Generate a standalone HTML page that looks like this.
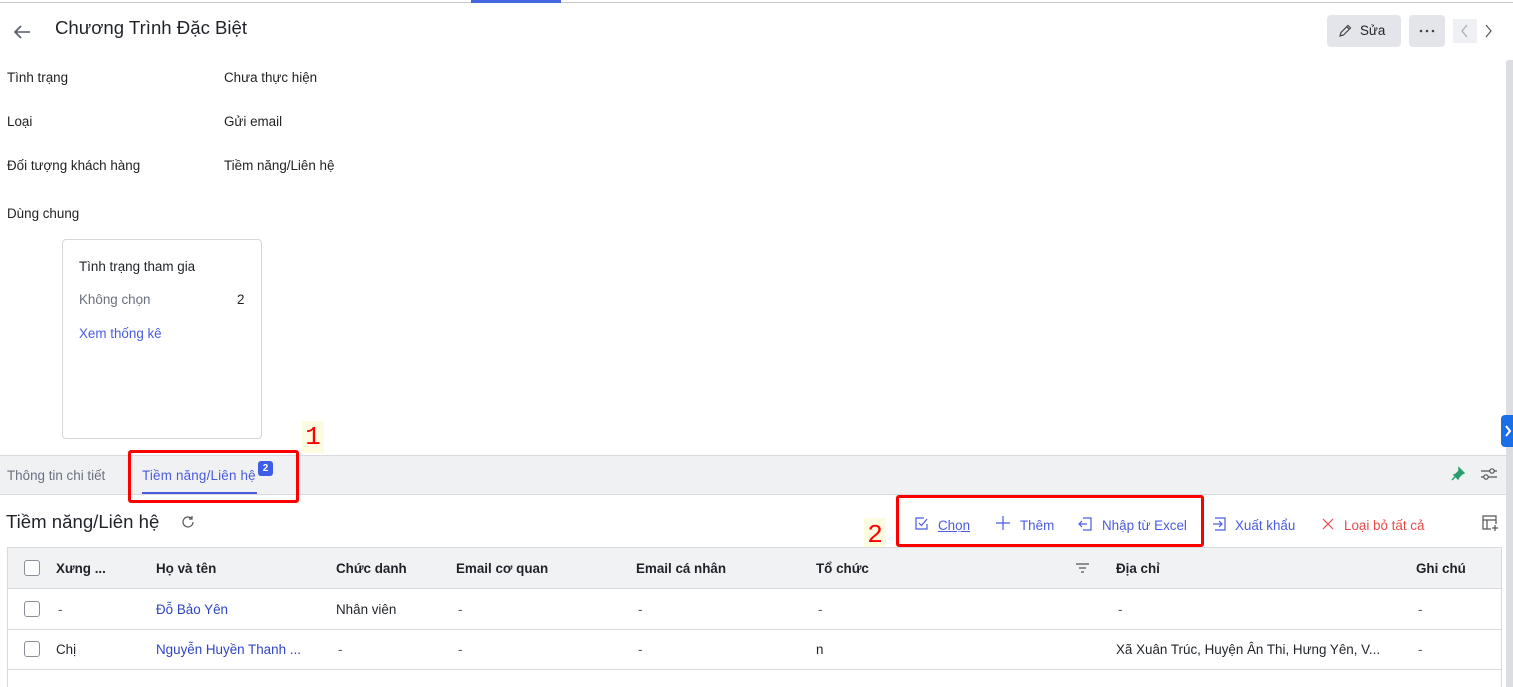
<!DOCTYPE html>
<html><head><meta charset="utf-8">
<style>
*{box-sizing:border-box;margin:0;padding:0}
body{width:1513px;height:687px;overflow:hidden;background:#fff;font-family:"Liberation Sans",sans-serif;font-size:13.4px;color:#1f2329;position:relative}
.a{position:absolute;white-space:nowrap}
.lbl{color:#222}
.th{font-weight:bold;font-size:13.4px;color:#1f2329}
.cb{position:absolute;width:16px;height:16px;border:1.5px solid #8a8f99;border-radius:3px;background:#fff}
.blue{color:#4a5be0}
.link{color:#2f44c4}
svg{position:absolute}
</style></head><body>
<div class="a" style="left:0;top:2px;width:1513px;height:1px;background:#c8c9d0"></div>
<div class="a" style="left:471px;top:0;width:90px;height:3px;background:#4466e0"></div>

<svg style="left:12px;top:23px" width="20" height="18" viewBox="0 0 20 18"><path d="M18 9H3M9 3L3 9l6 6" stroke="#555b66" stroke-width="1.6" fill="none"/></svg>
<div class="a" style="left:55px;top:17px;font-size:18.6px;color:#1f2329">Chương Trình Đặc Biệt</div>

<div class="a" style="left:1327px;top:15px;width:74px;height:32px;background:#e4e5ea;border-radius:4px"></div>
<svg style="left:1337px;top:23px" width="16" height="16" viewBox="0 0 16 16"><path d="M3 13l1-3.5 7-7 2.5 2.5-7 7z M10 4l2.5 2.5" stroke="#444" stroke-width="1.2" fill="none"/></svg>
<div class="a" style="left:1360px;top:23px;font-size:13.4px">Sửa</div>
<div class="a" style="left:1409px;top:15px;width:36px;height:32px;background:#e4e5ea;border-radius:4px"></div>
<svg style="left:1419px;top:29px" width="16" height="4"><circle cx="2" cy="2" r="1.3" fill="#444"/><circle cx="8" cy="2" r="1.3" fill="#444"/><circle cx="14" cy="2" r="1.3" fill="#444"/></svg>
<div class="a" style="left:1453px;top:19px;width:24px;height:24px;background:#eef0f3"></div>
<svg style="left:1459px;top:24px" width="12" height="14"><path d="M8 1L3 7l5 6" stroke="#aaa" stroke-width="1.2" fill="none"/></svg>
<svg style="left:1483px;top:24px" width="12" height="14"><path d="M3 1l5 6-5 6" stroke="#555" stroke-width="1.2" fill="none"/></svg>

<div class="a" style="left:1506px;top:60px;width:7px;height:627px;background:#dcdde2;border-radius:3px 0 0 0"></div>
<div class="a" style="left:1501px;top:415px;width:12px;height:32px;background:#1a6fe8;border-radius:4px 0 0 4px"></div>
<svg style="left:1503px;top:424px" width="10" height="14"><path d="M3 2l4 5-4 5" stroke="#fff" stroke-width="2" fill="none"/></svg>

<div class="a lbl" style="left:7px;top:70px">Tình trạng</div>
<div class="a lbl" style="left:224px;top:70px">Chưa thực hiện</div>
<div class="a lbl" style="left:7px;top:114px">Loại</div>
<div class="a lbl" style="left:224px;top:114px">Gửi email</div>
<div class="a lbl" style="left:7px;top:158px">Đối tượng khách hàng</div>
<div class="a lbl" style="left:224px;top:158px">Tiềm năng/Liên hệ</div>
<div class="a lbl" style="left:7px;top:206px">Dùng chung</div>

<div class="a" style="left:62px;top:239px;width:200px;height:200px;border:1px solid #d5d7dc;border-radius:4px"></div>
<div class="a" style="left:79px;top:259px">Tình trạng tham gia</div>
<div class="a" style="left:79px;top:292px;color:#6b7080">Không chọn</div>
<div class="a" style="left:237px;top:292px">2</div>
<div class="a" style="left:79px;top:326px;color:#4a5be0">Xem thống kê</div>

<div class="a" style="left:302px;top:421px;width:22px;height:32px;background:#fdfbe0;color:#f00;font-size:26px;line-height:32px;text-align:center;font-family:'Liberation Mono',monospace">1</div>

<div class="a" style="left:0;top:455px;width:1506px;height:40px;background:#f0f1f3;border-top:1px solid #d8dadf;border-bottom:1px solid #d8dadf"></div>
<div class="a" style="left:7px;top:468px;color:#6b7080">Thông tin chi tiết</div>
<div class="a" style="left:142px;top:468px;color:#4a5be0;letter-spacing:0.2px">Tiềm năng/Liên hệ</div>
<div class="a" style="left:258px;top:461px;width:15px;height:15px;background:#3d5ce8;color:#fff;border-radius:3px;font-size:10px;font-weight:bold;text-align:center;line-height:15px">2</div>
<div class="a" style="left:142px;top:492px;width:115px;height:2px;background:#4a5be0"></div>
<div class="a" style="left:128px;top:450px;width:171px;height:53px;border:3px solid #f00;border-radius:3px"></div>
<svg style="left:1450px;top:466px" width="16" height="16" viewBox="0 0 16 16"><path d="M9 2l5 5-2 1-3 3-1 2-4-4 2-1 3-3z M5 11l-3 3" stroke="#2a9d6e" fill="#2a9d6e" stroke-width="1.4"/></svg>
<svg style="left:1480px;top:466px" width="18" height="16" viewBox="0 0 18 16"><path d="M1 5h16M1 11h16" stroke="#555" stroke-width="1.2"/><circle cx="12" cy="5" r="2.2" fill="#f0f1f3" stroke="#555" stroke-width="1.2"/><circle cx="6" cy="11" r="2.2" fill="#f0f1f3" stroke="#555" stroke-width="1.2"/></svg>

<div class="a" style="left:6px;top:511px;font-size:18.6px">Tiềm năng/Liên hệ</div>
<svg style="left:180px;top:514px" width="16" height="16" viewBox="0 0 16 16"><path d="M13 8a5 5 0 1 1-1.5-3.6M12 2v3h-3" stroke="#555" stroke-width="1.2" fill="none"/></svg>

<div class="a" style="left:864px;top:518px;width:22px;height:34px;background:#fdfbe0;color:#f00;font-size:26px;line-height:34px;text-align:center;font-family:'Liberation Mono',monospace">2</div>
<div class="a" style="left:896px;top:495px;width:308px;height:52px;border:3px solid #f00;border-radius:3px"></div>

<svg style="left:914px;top:516px" width="16" height="16" viewBox="0 0 16 16"><path d="M13 8v5H2V2h8" stroke="#4a5be0" fill="none" stroke-width="1.2"/><path d="M5 7l2.5 2.5L13 3" stroke="#4a5be0" fill="none" stroke-width="1.2"/></svg>
<div class="a blue" style="left:938px;top:518px;text-decoration:underline">Chọn</div>
<svg style="left:996px;top:516px" width="14" height="14"><path d="M7 0v14M0 7h14" stroke="#4a5be0" stroke-width="1.2"/></svg>
<div class="a blue" style="left:1020px;top:518px">Thêm</div>
<svg style="left:1077px;top:516px" width="16" height="16" viewBox="0 0 16 16"><path d="M6 2h8v12H6M2 8h8M5 5L2 8l3 3" stroke="#4a5be0" fill="none" stroke-width="1.2"/></svg>
<div class="a blue" style="left:1102px;top:518px">Nhập từ Excel</div>
<svg style="left:1211px;top:516px" width="16" height="16" viewBox="0 0 16 16"><path d="M2 2h10v12H2M0 8h9M6 5l3 3-3 3" stroke="#4a5be0" fill="none" stroke-width="1.2" transform="translate(2,0)"/></svg>
<div class="a blue" style="left:1235px;top:518px">Xuất khẩu</div>
<svg style="left:1322px;top:518px" width="12" height="12"><path d="M1 1l10 10M11 1L1 11" stroke="#e84a4a" stroke-width="1.2"/></svg>
<div class="a" style="left:1344px;top:518px;color:#e84a4a">Loại bỏ tất cả</div>
<svg style="left:1481px;top:514px" width="18" height="18" viewBox="0 0 18 18"><path d="M10 15H2V2h13v8M2 6h13M6 6v9M14 11v6M11 14h6" stroke="#555" fill="none" stroke-width="1.2"/></svg>

<div class="a" style="left:7px;top:547px;width:1495px;height:140px;border:1px solid #d8dadf;border-bottom:none"></div>
<div class="a" style="left:8px;top:548px;width:1493px;height:41px;background:#f1f2f4;border-bottom:1px solid #d8dadf"></div>
<div class="a" style="left:8px;top:629px;width:1493px;height:1px;background:#d8dadf"></div>
<div class="a" style="left:8px;top:669px;width:1493px;height:1px;background:#d8dadf"></div>

<div class="cb" style="left:24px;top:560px"></div>
<div class="cb" style="left:24px;top:601px"></div>
<div class="cb" style="left:24px;top:641px"></div>

<div class="a th" style="left:56px;top:561px">Xưng ...</div>
<div class="a th" style="left:156px;top:561px">Họ và tên</div>
<div class="a th" style="left:336px;top:561px">Chức danh</div>
<div class="a th" style="left:456px;top:561px">Email cơ quan</div>
<div class="a th" style="left:636px;top:561px">Email cá nhân</div>
<div class="a th" style="left:816px;top:561px">Tổ chức</div>
<svg style="left:1076px;top:563px" width="13" height="10"><path d="M0 1h13M3 5h7M5 9h3" stroke="#555" stroke-width="1.2"/></svg>
<div class="a th" style="left:1116px;top:561px">Địa chỉ</div>
<div class="a th" style="left:1416px;top:561px">Ghi chú</div>

<div class="a" style="left:58px;top:602px;color:#555">-</div>
<div class="a link" style="left:156px;top:602px">Đỗ Bảo Yên</div>
<div class="a" style="left:336px;top:602px">Nhân viên</div>
<div class="a" style="left:458px;top:602px;color:#555">-</div>
<div class="a" style="left:638px;top:602px;color:#555">-</div>
<div class="a" style="left:818px;top:602px;color:#555">-</div>
<div class="a" style="left:1118px;top:602px;color:#555">-</div>
<div class="a" style="left:1418px;top:602px;color:#555">-</div>

<div class="a" style="left:56px;top:642px">Chị</div>
<div class="a link" style="left:156px;top:642px">Nguyễn Huyền Thanh ...</div>
<div class="a" style="left:338px;top:642px;color:#555">-</div>
<div class="a" style="left:458px;top:642px;color:#555">-</div>
<div class="a" style="left:638px;top:642px;color:#555">-</div>
<div class="a" style="left:816px;top:642px">n</div>
<div class="a" style="left:1116px;top:642px">Xã Xuân Trúc, Huyện Ân Thi, Hưng Yên, V...</div>
<div class="a" style="left:1418px;top:642px;color:#555">-</div>
</body></html>
